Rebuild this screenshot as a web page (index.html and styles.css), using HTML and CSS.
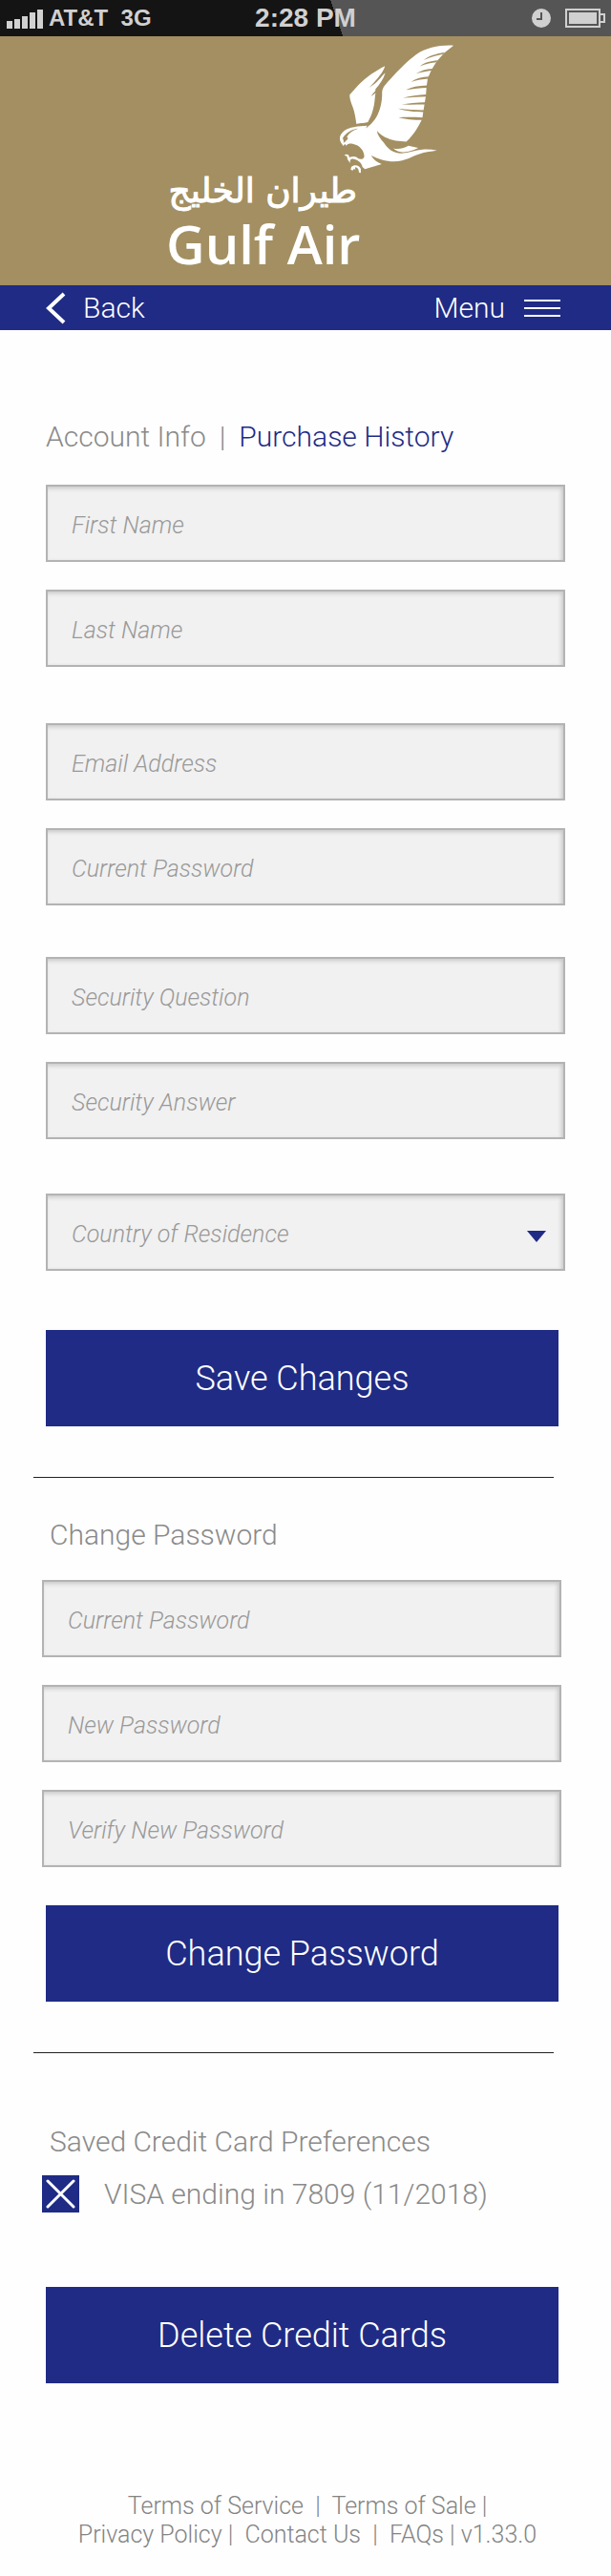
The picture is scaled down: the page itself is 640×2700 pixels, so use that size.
FILE: index.html
```html
<!DOCTYPE html>
<html lang="en">
<head>
<meta charset="utf-8">
<meta name="viewport" content="width=device-width, initial-scale=1">
<title>Gulf Air – Account Info</title>
<link rel="stylesheet" href="styles.css">
</head>
<body>
<div class="status">
  <div class="status-left">
    <svg class="signal" width="40" height="21" viewBox="0 0 40 21" aria-hidden="true"><path d="M1 13h6v8H1zM9 11h6v10H9zM17 8h6v13h-6zM25 4h6v17h-6zM33 1h6v20h-6z"/></svg>
    <span>AT&amp;T&nbsp; 3G</span>
  </div>
  <time class="status-time">2:28 PM</time>
  <div class="status-right">
    <svg width="20" height="20" viewBox="0 0 20 20" aria-hidden="true"><circle cx="10" cy="10" r="10" fill="#d0d0d0"/><path d="M10 4v7H5" fill="none" stroke="#555" stroke-width="2"/></svg>
    <svg width="42" height="20" viewBox="0 0 42 20" aria-hidden="true"><path d="M1 1h35v18H1zM36 6h5v8h-5" fill="none" stroke="#d0d0d0" stroke-width="2"/><path d="M4 4h29v12H4z" fill="#d0d0d0"/></svg>
  </div>
</div>

<header class="brand">
  <div class="logo">
    <svg class="falcon" viewBox="40 44 370 410" aria-hidden="true">
      <g fill="#fff">
        <path d="M188 113C160 127 128 148 104 173L77 203C76 212 80 226 87 243C93 260 96 279 98 296L134 290C146 270 154 244 156 218C157 204 160 194 158 186C172 170 184 154 189 135C184 138 172 149 163 157C172 145 184 128 188 113Z"/>
        <path d="M404 48C362 46 318 54 286 77C262 95 232 124 205 154C188 172 180 180 179 196C180 224 172 256 160 275C148 294 136 302 128 309L132 301C104 302 74 306 60 317C46 328 42 342 50 355L57 365L62 358L66 364C72 357 78 357 86 358C106 362 122 376 123 398C121 407 112 408 104 405C98 398 88 396 76 401L74 394C70 390 64 390 60 394L69 398C68 408 75 412 79 420C76 410 80 404 90 406C106 410 116 420 117 431L125 438L178 422C160 415 149 404 145 395C166 406 190 414 216 414C254 414 278 394 310 386C326 382 340 382 352 379C338 376 322 375 306 376C284 378 264 386 240 388C212 388 197 373 185 355C173 342 164 330 163 317C176 333 197 344 222 348L255 351C276 333 292 306 303 284L306 276L309 256L313 231L317 206L319 178L323 151L335 124L352 97L374 72Z"/>
        <path d="M214 372C230 376 244 373 262 364L293 371C277 379 262 385 242 384C230 383 222 379 214 372Z"/>
        <path d="M112 437C108 425 91 422 82 431L80 439L86 442L91 436L95 441L94 432C103 433 106 440 106 448L112 450Z"/>
      </g>
      <g class="cut">
        <path d="M376 69C350 74 326 80 310 94C332 84 354 78 371 75Z"/>
        <path d="M354 95C332 97 314 101 298 114C317 106 336 102 350 101Z"/>
        <path d="M338 121C318 122 300 127 286 137C304 131 320 129 334 127Z"/>
        <path d="M327 146C304 147 286 152 270 163C290 157 308 154 324 153Z"/>
        <path d="M321 174C294 175 272 179 254 188C278 184 300 181 320 181Z"/>
        <path d="M319 202C292 204 268 206 245 213C270 211 296 210 318 209Z"/>
        <path d="M315 227C288 228 262 230 240 234C264 235 290 234 314 234Z"/>
        <path d="M312 252C284 252 256 250 230 247C252 255 282 258 311 258Z"/>
        <path d="M309 275C282 274 254 273 231 275C250 280 280 283 306 283Z"/>
        <path d="M188 123C172 142 158 162 138 181C158 169 170 156 185 137Z"/>
        <path d="M164 184C156 194 148 201 144 208C150 204 156 200 160 196Z"/>
        <path d="M94 296C108 294 122 293 137 290L128 299C116 298 105 300 92 303Z"/>
        <path d="M104 310C86 312 66 322 55 340C58 348 59 351 57 355C62 352 68 348 72 340L68 337C74 325 88 315 104 310Z"/>
      </g>
    </svg>
    <div class="logo-ar" lang="ar" dir="rtl">طيران الخليج</div>
    <div class="logo-en">Gulf Air</div>
  </div>
</header>

<nav class="bar">
  <a class="bar-link" href="#back"><svg width="22" height="34" viewBox="0 0 22 34" aria-hidden="true"><path d="M19 2L3 17l16 15" fill="none" stroke="#fff" stroke-width="4"/></svg>Back</a>
  <button class="bar-link" type="button">Menu<svg width="38" height="20" viewBox="0 0 38 20" aria-hidden="true"><path d="M0 2h38M0 10h38M0 18h38" stroke="#fff" stroke-width="2"/></svg></button>
</nav>

<main>
  <form class="account">
    <h1 class="title tabs"><span>Account Info</span><span>|</span><a href="#history">Purchase History</a></h1>
    <div class="group">
      <input class="field" type="text" placeholder="First Name" aria-label="First Name">
      <input class="field" type="text" placeholder="Last Name" aria-label="Last Name">
    </div>
    <div class="group">
      <input class="field" type="email" placeholder="Email Address" aria-label="Email Address">
      <input class="field" type="password" placeholder="Current Password" aria-label="Current Password">
    </div>
    <div class="group">
      <input class="field" type="text" placeholder="Security Question" aria-label="Security Question">
      <input class="field" type="text" placeholder="Security Answer" aria-label="Security Answer">
    </div>
    <div class="group select-wrap">
      <select class="field" aria-label="Country of Residence"><option>Country of Residence</option></select>
      <svg class="arrow" width="20" height="12" viewBox="0 0 20 12" aria-hidden="true"><path d="M0 0h20L10 12z"/></svg>
    </div>
    <button class="action" type="button">Save Changes</button>
  </form>

  <hr class="rule">

  <form class="password">
    <h2 class="title">Change Password</h2>
    <div class="group">
      <input class="field" type="password" placeholder="Current Password" aria-label="Current Password">
      <input class="field" type="password" placeholder="New Password" aria-label="New Password">
      <input class="field" type="password" placeholder="Verify New Password" aria-label="Verify New Password">
    </div>
    <button class="action" type="button">Change Password</button>
  </form>

  <hr class="rule">

  <form class="cards">
    <h2 class="title">Saved Credit Card Preferences</h2>
    <label class="card"><input class="check" type="checkbox" checked><span>VISA ending in 7809 (11/2018)</span></label>
    <button class="action" type="button">Delete Credit Cards</button>
  </form>
</main>

<footer class="footer">
  <div><a href="#service">Terms of Service</a>&nbsp; |&nbsp; <a href="#sale">Terms of Sale</a> |</div>
  <div><a href="#privacy">Privacy Policy</a> |&nbsp; <a href="#contact">Contact Us</a>&nbsp; |&nbsp; <a href="#faqs">FAQs</a> | v1.33.0</div>
</footer>
</body>
</html>
```
FILE: styles.css
```css
* { box-sizing: border-box; }
body {
  margin: 0;
  background: #fefefe;
  color: #8a8a8a;
  font-family: Roboto, "Liberation Sans", sans-serif;
  font-weight: 300;
}
a { color: inherit; text-decoration: none; }
svg { display: block; flex: none; }

.status {
  display: grid;
  grid-template-columns: 1fr auto 1fr;
  align-items: center;
  height: 38px;
  padding: 0 6px;
  background: linear-gradient(71deg, #141414 55%, #555 55%);
  color: #d0d0d0;
  font: bold 28px/36px "Liberation Sans", Arial, sans-serif;
}
.status-left { display: flex; align-items: center; gap: 5px; font-size: 24px; }
.signal { fill: #d0d0d0; }
.status-right { display: flex; justify-content: flex-end; align-items: center; gap: 15px; }

.brand {
  display: flex;
  justify-content: center;
  padding: 8px 0 16px;
  background: #a38f61;
}
.logo { display: grid; width: 292px; color: #fff; }
.falcon { width: 123px; height: 137px; margin-left: 180px; }
.cut { fill: #a38f61; }
.logo-ar {
  width: 200px;
  margin-bottom: 10px;
  font: 36px/34px "DejaVu Sans", sans-serif;
  -webkit-text-stroke: 1px #fff;
  white-space: nowrap;
}
.logo-en {
  font: 600 56px/56px "Open Sans", "Noto Sans", sans-serif;
  white-space: nowrap;
}

.bar {
  display: flex;
  justify-content: space-between;
  align-items: center;
  height: 47px;
  padding: 0 53px 0 48px;
  background: #1f2b85;
}
.bar-link {
  display: flex;
  align-items: center;
  gap: 17px;
  padding: 0;
  border: 0;
  background: none;
  color: #fff;
  font: 300 30px/36px Roboto, sans-serif;
}
.bar-link:last-child { gap: 20px; }

.title {
  margin: 0;
  font-size: 30px;
  font-weight: 300;
  line-height: 36px;
}
.tabs { display: flex; gap: 14px; }
.tabs a { color: #1f2b85; }

.account { padding: 94px 48px 0; }
.account .title { margin-bottom: 32px; }
.group { display: grid; gap: 29px; }
.account .group { margin-bottom: 57px; }
.account .group:nth-of-type(1) { margin-bottom: 59px; }
.account .group:nth-of-type(2) { margin-bottom: 54px; }

.field {
  appearance: none;
  width: 100%;
  height: 81px;
  padding: 4px 25px 0;
  border: 2px solid #b3b3b3;
  border-radius: 0;
  background: #f1f1f1;
  box-shadow: inset -2px 2px 4px #c8c8c8;
  color: #999;
  font: italic 300 25px/30px Roboto, sans-serif;
}
.field::placeholder { color: #999; opacity: 1; }
.select-wrap { position: relative; }
.arrow { position: absolute; right: 20px; top: 39px; fill: #1f2b85; pointer-events: none; }

.action {
  display: block;
  width: 100%;
  height: 101px;
  padding: 0;
  border: 0;
  background: #1f2b85;
  color: #fff;
  font: 300 36px/44px Roboto, sans-serif;
}
.account .action { margin-top: 62px; width: calc(100% - 7px); }
.account .select-wrap { margin-bottom: 0; }

.rule { height: 1px; margin: 53px 60px 0 35px; border: 0; background: #222; }

.password { padding: 42px 52px 0 44px; }
.password .title { padding-left: 8px; margin-bottom: 29px; }
.password .action { margin: 40px 4px 0; width: calc(100% - 7px); }

.cards { padding: 75px 55px 0 44px; }
.cards .title { padding-left: 8px; }
.card { display: flex; align-items: center; gap: 26px; margin-top: 17px; font-size: 30px; line-height: 36px; }
.check {
  appearance: none;
  flex: none;
  width: 39px;
  height: 39px;
  margin: 0;
  background: #1f2b85;
}
.check:checked {
  background: #1f2b85 url("data:image/svg+xml,%3Csvg xmlns='http://www.w3.org/2000/svg' viewBox='0 0 39 39'%3E%3Cpath d='M6 6L33 33M33 6L6 33' stroke='%23fff' stroke-width='3' stroke-linecap='round'/%3E%3C/svg%3E");
}
.cards .action { margin: 78px 0 0 4px; width: calc(100% - 4px); }

.footer {
  padding: 114px 16px 24px 20px;
  color: #848484;
  font-size: 25px;
  line-height: 30px;
  text-align: center;
}
```
